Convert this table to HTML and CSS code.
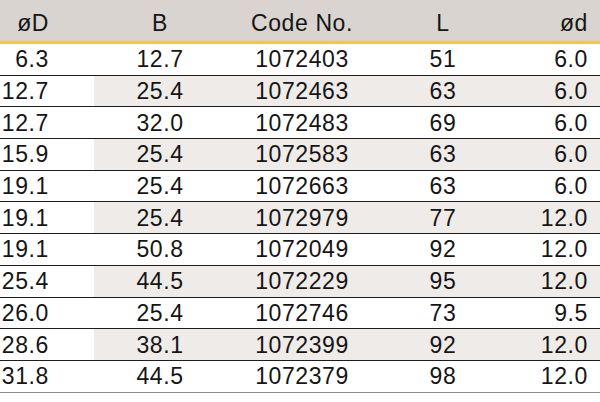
FILE: index.html
```html
<!DOCTYPE html>
<html>
<head>
<meta charset="utf-8">
<link rel="stylesheet" href="styles.css">
</head>
<body>
<div class="table">
  <div class="row head">
    <div class="c c1">øD</div><div class="c c2">B</div><div class="c c3">Code No.</div><div class="c c4">L</div><div class="c c5">ød</div>
  </div>
  <div class="row"><div class="c c1">6.3</div><div class="c c2">12.7</div><div class="c c3">1072403</div><div class="c c4">51</div><div class="c c5">6.0</div></div>
  <div class="row alt"><div class="c c1">12.7</div><div class="c c2">25.4</div><div class="c c3">1072463</div><div class="c c4">63</div><div class="c c5">6.0</div></div>
  <div class="row"><div class="c c1">12.7</div><div class="c c2">32.0</div><div class="c c3">1072483</div><div class="c c4">69</div><div class="c c5">6.0</div></div>
  <div class="row alt"><div class="c c1">15.9</div><div class="c c2">25.4</div><div class="c c3">1072583</div><div class="c c4">63</div><div class="c c5">6.0</div></div>
  <div class="row"><div class="c c1">19.1</div><div class="c c2">25.4</div><div class="c c3">1072663</div><div class="c c4">63</div><div class="c c5">6.0</div></div>
  <div class="row alt"><div class="c c1">19.1</div><div class="c c2">25.4</div><div class="c c3">1072979</div><div class="c c4">77</div><div class="c c5">12.0</div></div>
  <div class="row"><div class="c c1">19.1</div><div class="c c2">50.8</div><div class="c c3">1072049</div><div class="c c4">92</div><div class="c c5">12.0</div></div>
  <div class="row alt"><div class="c c1">25.4</div><div class="c c2">44.5</div><div class="c c3">1072229</div><div class="c c4">95</div><div class="c c5">12.0</div></div>
  <div class="row"><div class="c c1">26.0</div><div class="c c2">25.4</div><div class="c c3">1072746</div><div class="c c4">73</div><div class="c c5">9.5</div></div>
  <div class="row alt"><div class="c c1">28.6</div><div class="c c2">38.1</div><div class="c c3">1072399</div><div class="c c4">92</div><div class="c c5">12.0</div></div>
  <div class="row last"><div class="c c1">31.8</div><div class="c c2">44.5</div><div class="c c3">1072379</div><div class="c c4">98</div><div class="c c5">12.0</div></div>
</div>
</body>
</html>
```
FILE: styles.css
```css
html, body {
  margin: 0;
  padding: 0;
  background: #ffffff;
}
.table {
  width: 600px;
  font-family: "Liberation Sans", Arial, sans-serif;
  font-size: 23px;
  letter-spacing: 0.6px;
  color: #151515;
}
.row {
  display: grid;
  grid-template-columns: 94px 132px 152px 130px 92px;
  height: 31.7px;
  box-sizing: border-box;
  border-bottom: 1px solid #1c1c1c;
}
.row.last {
  border-bottom-color: #8a8a8a;
}
.row.head {
  height: 44px;
  background: #d9d4cf;
  border-bottom: 3px solid #f3c646;
  padding-top: 5px;
}
.c {
  display: flex;
  align-items: center;
  justify-content: center;
  line-height: 1;
  padding-top: 1px;
}
.c1 {
  justify-content: flex-end;
  padding-right: 45px;
}
.c5 {
  justify-content: flex-end;
  padding-right: 12px;
}
.row.alt .c2, .row.alt .c3, .row.alt .c4, .row.alt .c5 {
  background: #efebe8;
}
```
